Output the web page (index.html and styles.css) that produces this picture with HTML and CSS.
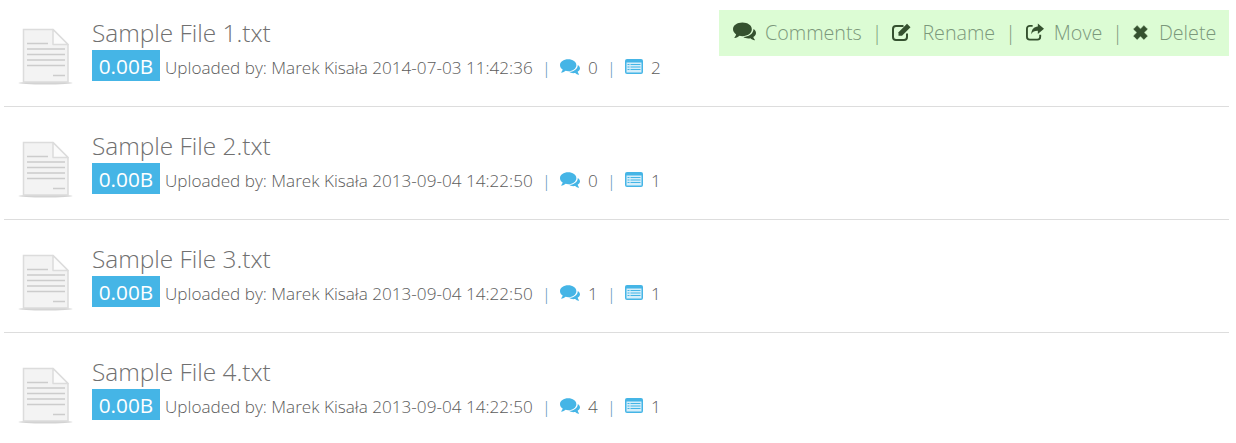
FILE: index.html
```html
<!DOCTYPE html>
<html lang="en">
<head>
  <meta charset="UTF-8" />
  <title>Files</title>
  <link rel="stylesheet" href="styles.css">
</head>
<body>
  <svg class="defs" width="0" height="0">
    <symbol id="i-file" viewBox="0 0 56 64">
      <ellipse cx="27.500" cy="59" rx="27" ry="1.500" fill="#c8c8c8" opacity=".8"/>
      <path d="M5.500 5.500H35L50 20.500V58H5.500z" fill="#f3f3f3" stroke="#dcdcdc" stroke-width="1.500"/>
      <path d="M35 5.500V20.500H50z" fill="#fbfbfb" stroke="#dcdcdc" stroke-width="1.500" stroke-linejoin="round"/>
      <path d="M9 19.500H30M9 25H47M9 30.500H47M9 36H47M9 41.500H47M35 51.500H47" stroke="#cccccc" stroke-width="1.600" fill="none"/>
    </symbol>
    <symbol id="i-comments" viewBox="0 0 22 18">
      <path d="M19.600 6.200c1.500.9 2.400 2.200 2.400 3.700 0 1.600-1 2.900-2.600 3.800.3.9.8 1.900 1.500 2.800.2.3 0 .6-.3.5-1.500-.3-2.900-1-3.900-2-.7.1-1.300.2-2 .2-1.900 0-3.600-.5-4.800-1.400 4.900-.1 9.600-2.800 9.700-7.600z"/>
      <path d="M9 0C4 0 0 2.700 0 6.400c0 2 1.200 3.700 3 4.900-.3 1-.8 2-1.600 2.900-.2.300 0 .6.300.6 1.700-.3 3.300-1 4.500-2.100.9.200 1.800.3 2.800.300 5 0 9-2.900 9-6.600S14 0 9 0z"/>
    </symbol>
    <symbol id="i-list" viewBox="0 0 18 15">
      <rect width="18" height="15" rx="2"/>
      <rect x="1.500" y="3.500" width="15" height="10" fill="#d5eefa"/>
      <path d="M2.500 5.500h2M2.500 8h2M2.500 10.500h2M5.500 5.500h10M5.500 8h10M5.500 10.500h10" stroke="#45b5e6" stroke-width="1.200" fill="none"/>
    </symbol>
    <symbol id="i-edit" viewBox="0 0 20 18">
      <path d="M11.500 3H4a3 3 0 0 0-3 3v8a3 3 0 0 0 3 3h8a3 3 0 0 0 3-3v-3.500" fill="none" stroke="currentColor" stroke-width="2"/>
      <path d="M6.500 9.200 15 .8l3.500 3.500-8.500 8.500H6.500z"/>
    </symbol>
    <symbol id="i-move" viewBox="0 0 19 18">
      <path d="M7 2.500H4a3 3 0 0 0-3 3V14a3 3 0 0 0 3 3h8a3 3 0 0 0 3-3v-2" fill="none" stroke="currentColor" stroke-width="2"/>
      <path d="M12.500 0 19 5.500 12.500 11V7.800C9 7.800 6.800 8.500 5.600 11.500 5.500 6.500 8.500 3.500 12.500 3.200z"/>
    </symbol>
    <symbol id="i-times" viewBox="1.500 1.500 12 12">
      <path d="M2 4.800 4.800 2l2.700 2.800L10.200 2 13 4.800l-2.800 2.700 2.800 2.700-2.800 2.800-2.700-2.800-2.700 2.800L2 10.200l2.800-2.700z" stroke="currentColor" stroke-width=".5" stroke-linejoin="round"/>
    </symbol>
  </svg>

  <ul class="files">
    <li class="file">
      <svg class="file-icon"><use href="#i-file"/></svg>
      <div class="file-info">
        <h3>Sample File 1.txt</h3>
        <p class="meta">
          <span class="size">0.00B</span>
          <span class="uploaded">Uploaded by: Marek Kisała 2014-07-03 11:42:36</span>
          <span class="sep">|</span>
          <svg class="ico-comments"><use href="#i-comments"/></svg><span>0</span>
          <span class="sep">|</span>
          <svg class="ico-list"><use href="#i-list"/></svg><span>2</span>
        </p>
      </div>
      <nav class="actions">
        <svg class="act-comments"><use href="#i-comments"/></svg><a>Comments</a>
        <span class="sep">|</span>
        <svg class="act-edit"><use href="#i-edit"/></svg><a>Rename</a>
        <span class="sep">|</span>
        <svg class="act-move"><use href="#i-move"/></svg><a>Move</a>
        <span class="sep">|</span>
        <svg class="act-times"><use href="#i-times"/></svg><a>Delete</a>
      </nav>
    </li>
    <li class="file">
      <svg class="file-icon"><use href="#i-file"/></svg>
      <div class="file-info">
        <h3>Sample File 2.txt</h3>
        <p class="meta">
          <span class="size">0.00B</span>
          <span class="uploaded">Uploaded by: Marek Kisała 2013-09-04 14:22:50</span>
          <span class="sep">|</span>
          <svg class="ico-comments"><use href="#i-comments"/></svg><span>0</span>
          <span class="sep">|</span>
          <svg class="ico-list"><use href="#i-list"/></svg><span>1</span>
        </p>
      </div>
    </li>
    <li class="file">
      <svg class="file-icon"><use href="#i-file"/></svg>
      <div class="file-info">
        <h3>Sample File 3.txt</h3>
        <p class="meta">
          <span class="size">0.00B</span>
          <span class="uploaded">Uploaded by: Marek Kisała 2013-09-04 14:22:50</span>
          <span class="sep">|</span>
          <svg class="ico-comments"><use href="#i-comments"/></svg><span>1</span>
          <span class="sep">|</span>
          <svg class="ico-list"><use href="#i-list"/></svg><span>1</span>
        </p>
      </div>
    </li>
    <li class="file">
      <svg class="file-icon"><use href="#i-file"/></svg>
      <div class="file-info">
        <h3>Sample File 4.txt</h3>
        <p class="meta">
          <span class="size">0.00B</span>
          <span class="uploaded">Uploaded by: Marek Kisała 2013-09-04 14:22:50</span>
          <span class="sep">|</span>
          <svg class="ico-comments"><use href="#i-comments"/></svg><span>4</span>
          <span class="sep">|</span>
          <svg class="ico-list"><use href="#i-list"/></svg><span>1</span>
        </p>
      </div>
    </li>
  </ul>
</body>
</html>
```
FILE: styles.css
```css
* { margin: 0; padding: 0; box-sizing: border-box; }
body {
  font-family: "Open Sans", sans-serif;
  font-weight: 300;
  background: #fff;
  color: #5c5c5c;
  overflow: hidden;
}
.defs { position: absolute; }
.files { list-style: none; margin: 0 7px 0 4px; }
.file {
  display: flex;
  align-items: flex-start;
  height: 113px;
  padding-top: 22px;
  border-top: 1px solid #ddd;
}
.file:first-child { height: 106px; padding-top: 16px; border-top: 0; }
.file svg { flex: none; }
.file-icon { width: 56px; height: 64px; margin: 8px 0 0 14px; }
.file-info { margin-left: 18px; }
.file-info h3 {
  font-size: 24.400px;
  font-weight: 300;
  line-height: 34px;
  color: #707070;
}
.meta {
  display: flex;
  align-items: flex-end;
  font-size: 17.140px;
  line-height: 26px;
  height: 31px;
}
.size {
  background: #45b5e6;
  color: #fff;
  font-size: 20.800px;
  font-weight: 400;
  line-height: 32px;
  height: 31px;
  text-align: center;
  margin-right: 5px;
  width: 68px;
}
.meta .sep { margin: 0 9px; color: #5b93b5; }
.ico-comments { width: 20px; height: 17px; fill: #45b5e6; margin: 0 8px 5px 0; }
.ico-list { width: 18px; height: 15px; fill: #45b5e6; margin: 0 8px 7px 0; }
.actions {
  display: flex;
  align-items: center;
  margin: -6px 0 0 auto;
  height: 46px;
  width: 510px;
  padding: 0 13px 2px 14px;
  background: #dcfcd4;
  font-size: 19.700px;
  color: #7b987b;
}
.actions svg { fill: #35512f; color: #35512f; }
.actions .sep { margin: 0 10px; color: #7b987b; }
.act-comments { width: 23px; height: 20px; margin-right: 9px; }
.act-edit { width: 20px; height: 18px; margin-right: 10px; }
.act-move { width: 18px; height: 18px; margin-right: 10px; }
.act-times { width: 15px; height: 15px; margin-right: 11px; }
```
